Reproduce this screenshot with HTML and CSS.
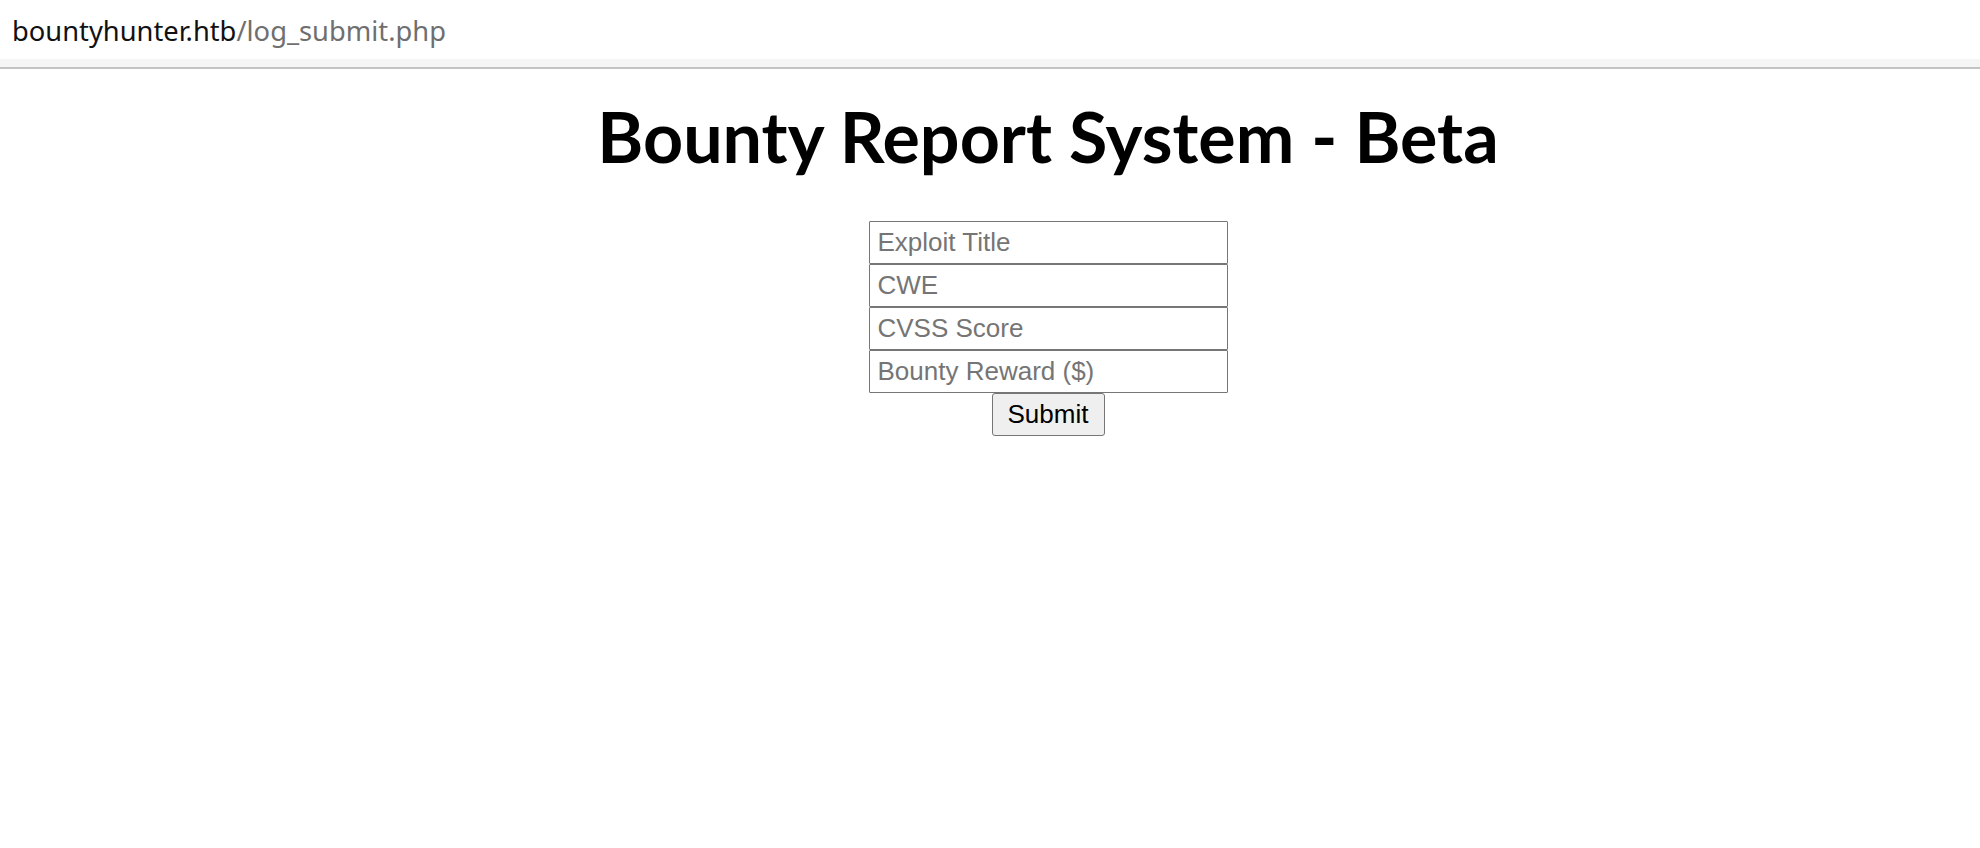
FILE: index.html
```html
<!DOCTYPE html>
<html>
<head>
<meta charset="utf-8">
<link rel="stylesheet" href="styles.css">
</head>
<body>
<header class="urlbar">
  <div class="url"><span class="host">bountyhunter.htb</span><span class="path">/log_submit.php</span></div>
</header>
<div class="urlbar-edge"></div>
<main class="page">
  <h1 class="title">Bounty Report System - Beta</h1>
  <form class="report-form">
    <input class="field" type="text" placeholder="Exploit Title">
    <input class="field" type="text" placeholder="CWE">
    <input class="field" type="text" placeholder="CVSS Score">
    <input class="field" type="text" placeholder="Bounty Reward ($)">
    <button class="submit" type="button">Submit</button>
  </form>
</main>
</body>
</html>
```
FILE: styles.css
```css
html, body {
  margin: 0;
  padding: 0;
  background: #ffffff;
}
.urlbar {
  height: 59px;
  display: flex;
  align-items: center;
  padding-left: 12px;
  background: #ffffff;
}
.url {
  font-family: "Noto Sans", "DejaVu Sans", sans-serif;
  font-size: 27.3px;
  padding-top: 2px;
}
.host { color: #111111; }
.path { color: #6f6f6f; }
.urlbar-edge {
  height: 8px;
  background: #f5f5f5;
  border-bottom: 2px solid #c3c3c3;
}
.page {
  display: flex;
  flex-direction: column;
  align-items: center;
  padding-left: 116px;
}
.title {
  font-family: Lato, "Noto Sans", sans-serif;
  font-weight: 700;
  font-size: 70px;
  line-height: 80px;
  margin: 27px 0 0 0;
  color: #000;
}
.report-form {
  display: flex;
  flex-direction: column;
  align-items: center;
  margin-top: 45px;
}
.field {
  box-sizing: border-box;
  width: 359px;
  height: 43px;
  margin: 0;
  padding: 0 8px;
  border: 1.6px solid #767676;
  border-radius: 1px;
  font-family: "Liberation Sans", Arial, sans-serif;
  font-size: 26px;
  color: #000;
  background: #fff;
}
.field::placeholder { color: #757575; }
.submit {
  box-sizing: border-box;
  width: 113px;
  height: 43px;
  margin: 0;
  padding: 0;
  border: 1.6px solid #767676;
  border-radius: 3px;
  background: #efefef;
  font-family: "Liberation Sans", Arial, sans-serif;
  font-size: 26px;
  color: #000;
}
```
